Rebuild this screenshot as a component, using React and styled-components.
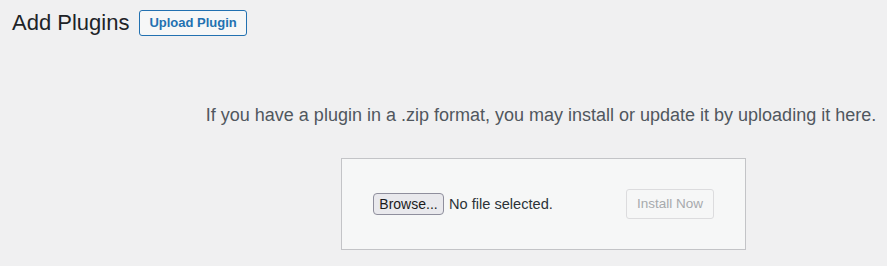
import React from "react";
import styled, { createGlobalStyle } from "styled-components";

const GlobalStyle = createGlobalStyle`
  html, body {
    margin: 0;
    padding: 0;
    background: #f0f0f1;
    overflow: hidden;
    font-family: "Liberation Sans", Arial, sans-serif;
  }
`;

const App = () => {
  return (
    <>
      <GlobalStyle />
      <Wrap>
        <HeaderRow>
          <PageTitle>Add Plugins</PageTitle>
          <TitleAction type="button">Upload Plugin</TitleAction>
        </HeaderRow>
        <UploadSection>
          <InstallHelp>
            If you have a plugin in a .zip format, you may install or update it by uploading it here.
          </InstallHelp>
          <UploadForm onSubmit={(e) => e.preventDefault()}>
            <FileField>
              <BrowseBtn type="button">Browse...</BrowseBtn>
              <FileName>No file selected.</FileName>
            </FileField>
            <InstallBtn type="submit" disabled>
              Install Now
            </InstallBtn>
          </UploadForm>
        </UploadSection>
      </Wrap>
    </>
  );
};

export default App;

const Wrap = styled.div`
  padding: 10px 0 0 12px;
`;

const HeaderRow = styled.div`
  display: flex;
  align-items: center;
  gap: 10px;
`;

const PageTitle = styled.h1`
  margin: 0;
  font-size: 22px;
  font-weight: 400;
  line-height: 26px;
  color: #1d2327;
`;

const TitleAction = styled.button`
  height: 26px;
  padding: 0 9px;
  border: 1px solid #2271b1;
  border-radius: 3px;
  background: #f6f7f7;
  color: #2271b1;
  font-family: inherit;
  font-size: 13px;
  font-weight: 700;
  line-height: 24px;
`;

const UploadSection = styled.div`
  width: 1063px;
  margin-top: 66px;
  text-align: center;
`;

const InstallHelp = styled.p`
  margin: 0 0 0 -5px;
  font-size: 18px;
  line-height: 27px;
  color: #50575e;
`;

const UploadForm = styled.form`
  display: inline-flex;
  justify-content: space-between;
  align-items: center;
  box-sizing: border-box;
  width: 405px;
  margin-top: 29px;
  padding: 30px 31px 30px 31px;
  background: #f6f7f7;
  border: 1px solid #c3c4c7;
`;

const FileField = styled.div`
  display: flex;
  align-items: center;
  gap: 5px;
`;

const BrowseBtn = styled.button`
  box-sizing: border-box;
  width: 71px;
  height: 22px;
  padding: 0;
  border: 1px solid #8f8f9d;
  border-radius: 4px;
  background: #e9e9ed;
  color: #1b1b1b;
  font-family: inherit;
  font-size: 14px;
  line-height: 20px;
`;

const FileName = styled.span`
  font-size: 14.6px;
  color: #2c3338;
`;

const InstallBtn = styled.button`
  box-sizing: border-box;
  height: 30px;
  padding: 0 10px;
  border: 1px solid #dcdcde;
  border-radius: 3px;
  background: #f6f7f7;
  color: #a7aaad;
  font-family: inherit;
  font-size: 13.5px;
  line-height: 28px;
`;
